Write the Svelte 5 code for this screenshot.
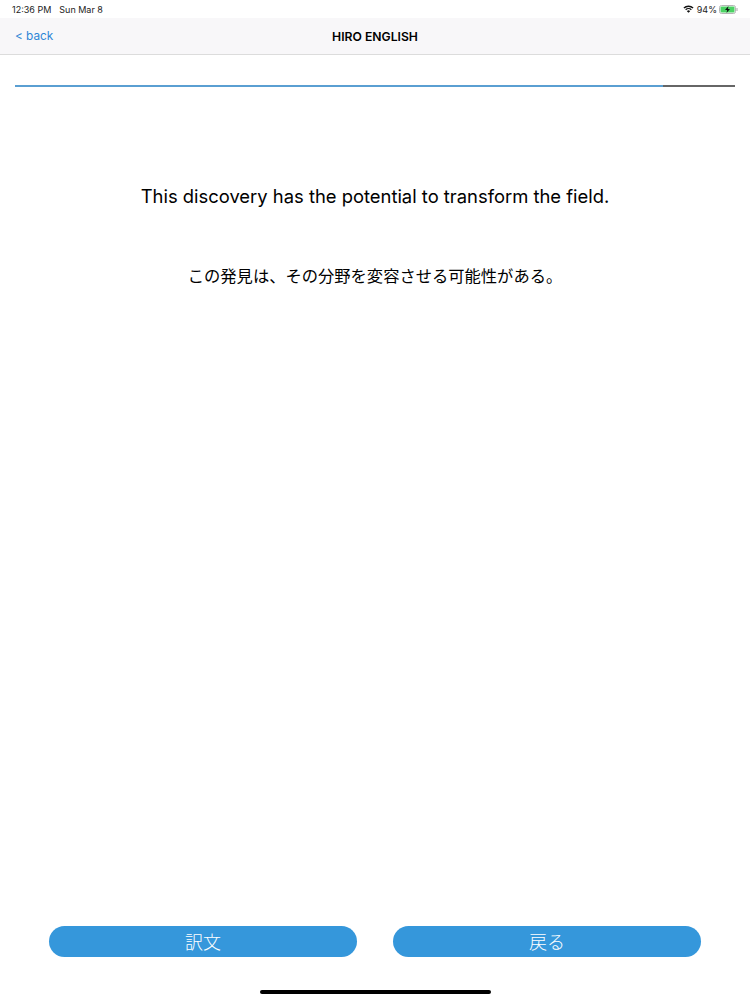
<script>
	const english = "This discovery has the potential to transform the field.";
	const japanese = "この発見は、その分野を変容させる可能性がある。";
	const progress = 90;
</script>

<div class="page">
	<div class="status">
		<span>12:36 PM</span>
		<span class="date">Sun Mar 8</span>
		<span class="right">
			<svg class="wifi" width="11" height="8" viewBox="0 0 12 9">
				<path d="M6 8.8 L4.2 6.9 A2.6 2.6 0 0 1 7.8 6.9 Z" fill="#111" />
				<path d="M3.3 5.9 L2.3 4.9 A5.3 5.3 0 0 1 9.7 4.9 L8.7 5.9 A3.9 3.9 0 0 0 3.3 5.9 Z" fill="#111" />
				<path d="M1.4 4 L0.3 2.9 A8.1 8.1 0 0 1 11.7 2.9 L10.6 4 A6.6 6.6 0 0 0 1.4 4 Z" fill="#111" />
			</svg>
			<span class="percent">94%</span>
			<svg class="battery" width="19" height="9" viewBox="0 0 19 9">
				<rect x="0.5" y="0.5" width="16" height="8" rx="2" fill="none" stroke="#b5b5b5" />
				<rect x="1.5" y="1.5" width="14" height="6" rx="1" fill="#4cd264" />
				<rect x="17.5" y="3" width="1" height="3" fill="#a8a8a8" />
				<path d="M9.5 1 L6 5 H8.2 L7.5 8 L11 4 H8.8 Z" fill="#111" />
			</svg>
		</span>
	</div>

	<header class="nav">
		<span class="back">&lt; back</span>
		<span class="title">HIRO ENGLISH</span>
	</header>

	<div class="track">
		<div class="fill" style="width:{progress}%"></div>
	</div>

	<main class="content">
		<p class="en">{english}</p>
		<p class="ja">{japanese}</p>
	</main>

	<div class="buttons">
		<button>訳文</button>
		<button>戻る</button>
	</div>

	<div class="home-bar"><div class="home"></div></div>
</div>

<style>
	:global(body) {
		margin: 0;
		background: #fff;
	}

	.page {
		width: 750px;
		height: 1000px;
		display: flex;
		flex-direction: column;
		font-family: Inter, "Liberation Sans", "Noto Sans CJK JP", sans-serif;
		color: #000;
		overflow: hidden;
	}

	.status {
		height: 18px;
		display: flex;
		align-items: center;
		padding: 0 12px;
		font-size: 9px;
		color: #222;
		background: #fff;
	}

	.date {
		margin-left: 8px;
	}

	.right {
		margin-left: auto;
		display: flex;
		align-items: center;
		gap: 3px;
	}

	.percent {
		margin-right: -1px;
	}

	.nav {
		height: 36px;
		display: flex;
		align-items: center;
		justify-content: center;
		position: relative;
		background: #f8f7f9;
		border-bottom: 1px solid #dcdcdc;
	}

	.back {
		position: absolute;
		left: 15px;
		top: 11px;
		font-size: 11.8px;
		color: #2f86d6;
	}

	.title {
		font-size: 12.2px;
		font-weight: 600;
	}

	.track {
		margin: 30px 15px 0;
		height: 2px;
		background: #666;
	}

	.fill {
		height: 100%;
		background: #5a9fd2;
	}

	.content {
		flex: 1;
		display: flex;
		flex-direction: column;
		align-items: center;
	}

	.en {
		margin: 96px 0 0;
		font-size: 18.4px;
		line-height: 26px;
	}

	.ja {
		margin: 56px 0 0;
		font-size: 16.3px;
		line-height: 22px;
	}

	.buttons {
		display: flex;
		justify-content: center;
		gap: 36px;
		margin-bottom: 27px;
	}

	button {
		width: 308px;
		height: 31px;
		border: 0;
		border-radius: 15.5px;
		padding: 0 0 2px;
		background: #3597db;
		color: #fff;
		font-family: inherit;
		font-size: 18px;
		font-weight: 300;
	}

	.home-bar {
		height: 16px;
		padding-top: 6px;
		box-sizing: border-box;
		display: flex;
		justify-content: center;
	}

	.home {
		width: 231px;
		height: 4px;
		border-radius: 2px;
		background: #000;
	}
</style>
